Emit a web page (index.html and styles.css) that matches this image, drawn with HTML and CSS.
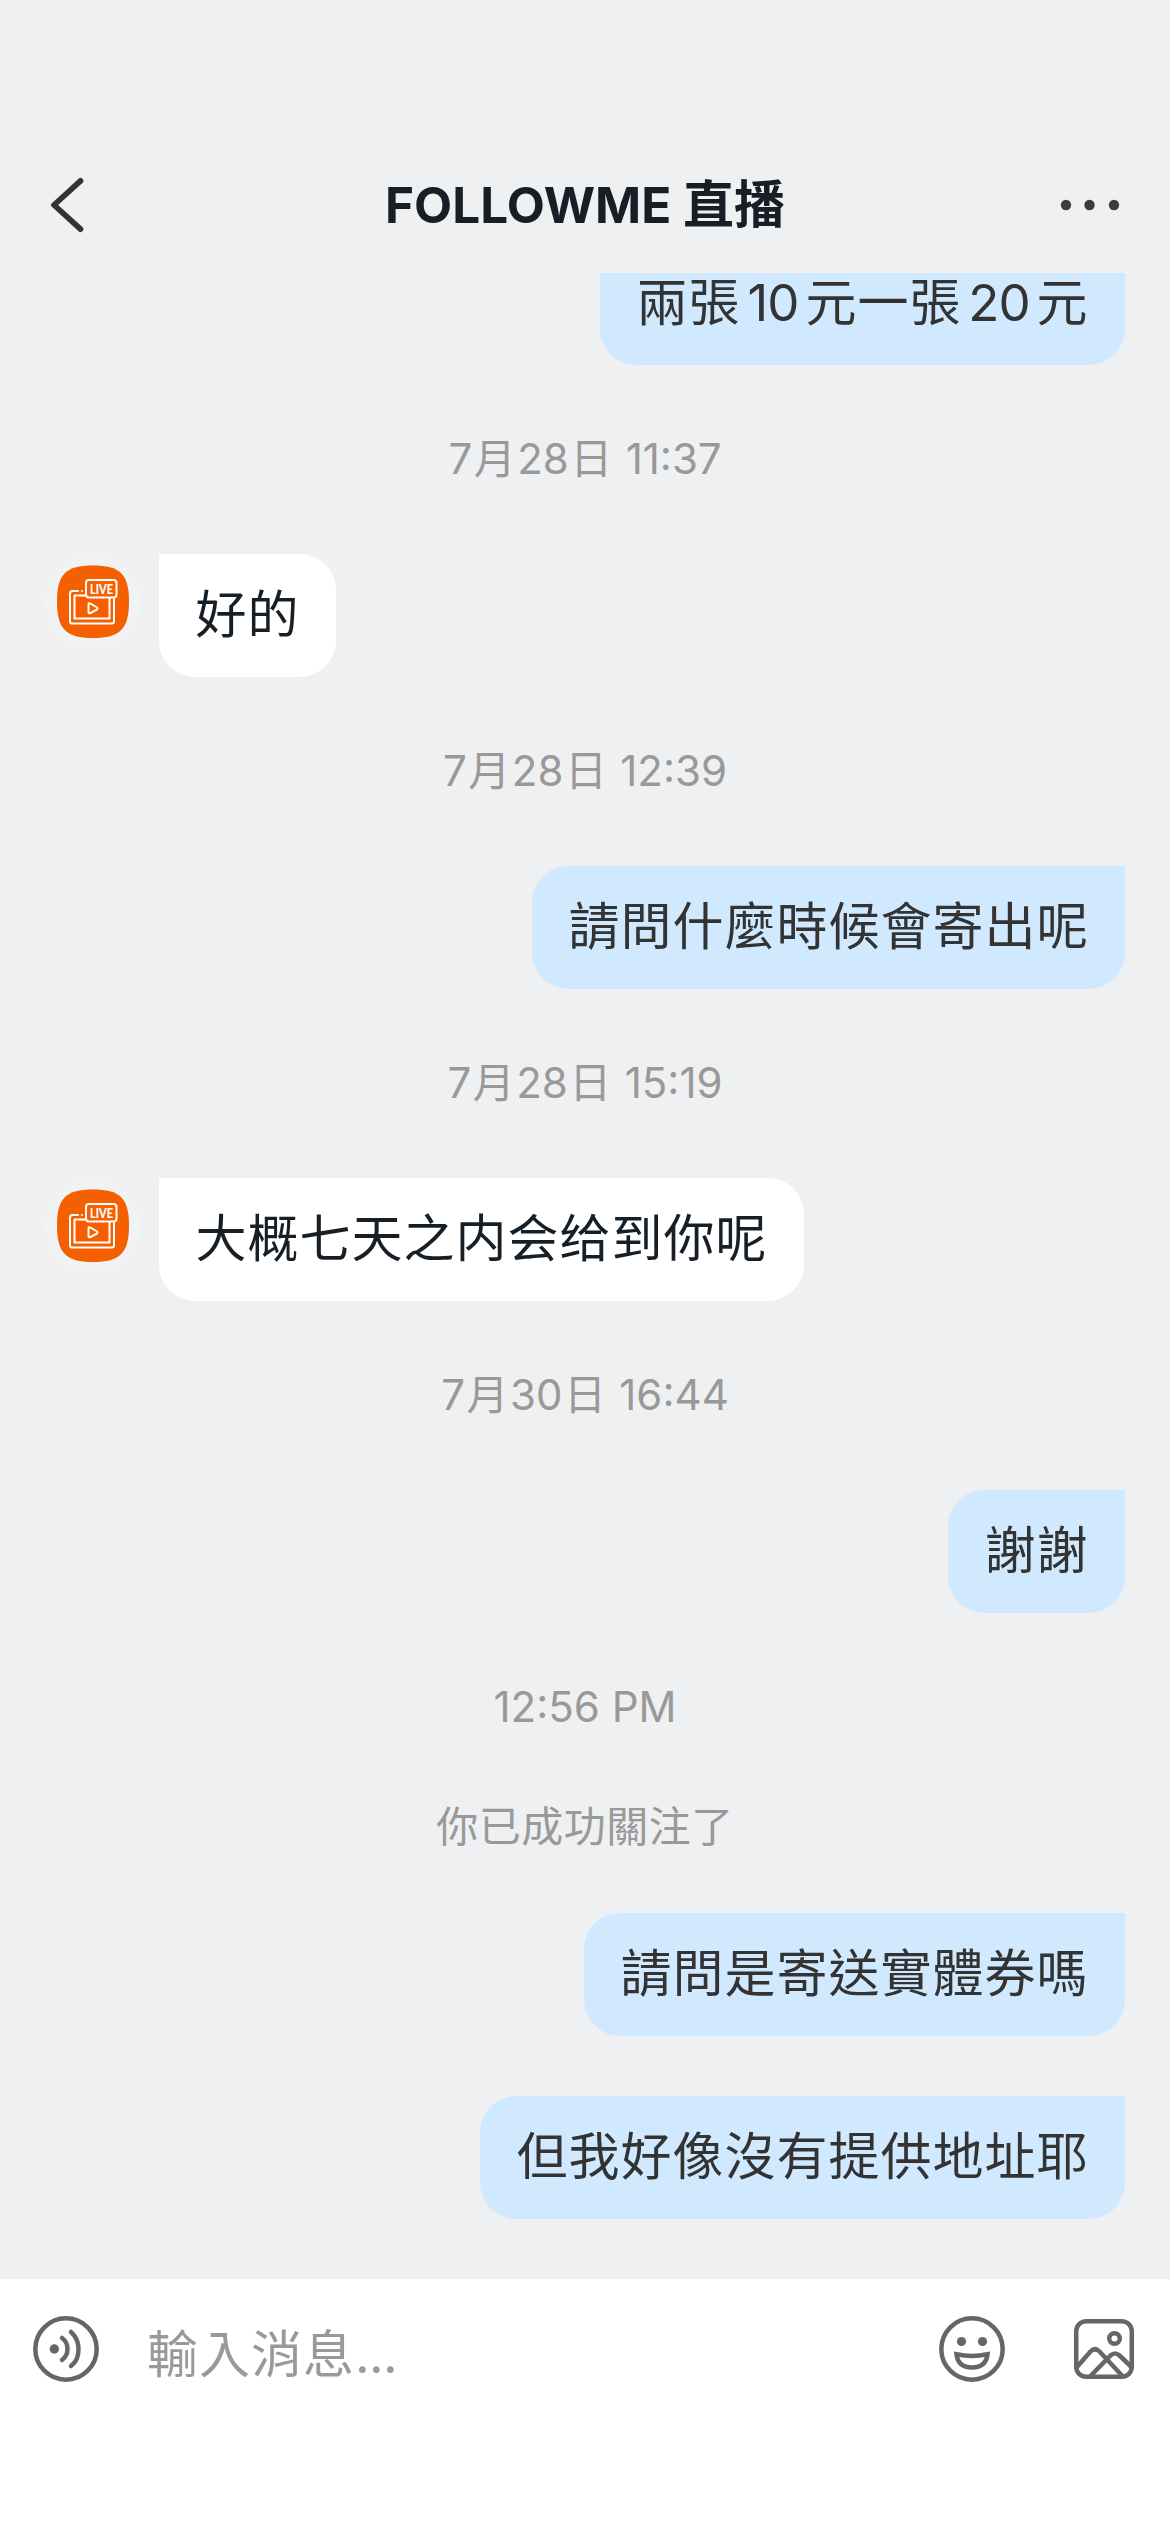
FILE: index.html
```html
<!DOCTYPE html>
<html lang="zh-Hant">
<head>
<meta charset="utf-8">
<title>FOLLOWME 直播</title>
<link rel="stylesheet" href="styles.css">
</head>
<body>
<svg class="defs" width="0" height="0" aria-hidden="true">
  <symbol id="avatar" viewBox="0 0 96 96">
    <circle cx="48" cy="48" r="48" fill="#f1f2f3"/>
    <path d="M48 11.500C75 11.500 84 20 84 47.500S75 84 48 84S12 75 12 47.500S21 11.500 48 11.500Z" fill="#f55f00"/>
    <g fill="none" stroke="#fff" stroke-width="2" stroke-linecap="round" stroke-linejoin="round">
      <path d="M33 37H27.500Q25 37 25 39.500V67.500Q25 69.500 27 69.500H67Q69 69.500 69 67.500V45"/>
      <path d="M40 41.500H29.500V64.500H64.500V45"/>
      <path d="M37 37h.1"/>
      <rect x="41" y="26" width="30.500" height="17.500" rx="3"/>
      <path d="M43.500 50.500Q43.500 48.500 45.500 49.500L52 53.500Q53 54.500 52 55.500L45.500 59Q43.500 60 43.500 58Z"/>
    </g>
  </symbol>
</svg>
<div class="screen">
  <header class="header">
    <svg class="back" width="40" height="60" viewBox="0 0 40 60"><path d="M35.500 5.800L9 30L35.500 54.200"/></svg>
    <h1 class="title">FOLLOWME <span class="title-cjk">直播</span></h1>
    <svg class="more" width="60" height="12" viewBox="0 0 60 12"><circle cx="6" cy="6" r="5.200"/><circle cx="29.500" cy="6" r="5.200"/><circle cx="54" cy="6" r="5.200"/></svg>
  </header>
  <main class="chat">
    <div class="row mine cut"><p class="bubble">兩張<span class="num one">10</span>元一張<span class="num two">20</span>元</p></div>
    <time class="date">7<i>月</i>28<i>日</i> 11:37</time>
    <div class="row theirs"><svg class="avatar" viewBox="0 0 96 96"><use href="#avatar" width="96" height="96"/><text x="45" y="39.500" class="live" textLength="23" lengthAdjust="spacingAndGlyphs">LIVE</text></svg><p class="bubble" lang="zh-Hans">好的</p></div>
    <time class="date">7<i>月</i>28<i>日</i> 12:39</time>
    <div class="row mine"><p class="bubble">請問什麼時候會寄出呢</p></div>
    <time class="date">7<i>月</i>28<i>日</i> 15:19</time>
    <div class="row theirs"><svg class="avatar" viewBox="0 0 96 96"><use href="#avatar" width="96" height="96"/><text x="45" y="39.500" class="live" textLength="23" lengthAdjust="spacingAndGlyphs">LIVE</text></svg><p class="bubble" lang="zh-Hans">大概七天之内会给到你呢</p></div>
    <time class="date">7<i>月</i>30<i>日</i> 16:44</time>
    <div class="row mine"><p class="bubble">謝謝</p></div>
    <time class="date">12:56 PM</time>
    <p class="notice">你已成功關注了</p>
    <div class="row mine"><p class="bubble">請問是寄送實體券嗎</p></div>
    <div class="row mine next"><p class="bubble">但我好像沒有提供地址耶</p></div>
  </main>
  <footer class="composer">
    <svg class="icon" width="66" height="66" viewBox="0 0 66 66">
      <circle cx="33" cy="33" r="30.700"/><circle class="dot" cx="21.300" cy="33" r="4.700"/>
      <path d="M29 22Q34.500 26 34.500 33T29 44M38 16Q45.500 22.500 45.500 33.500T38 50"/>
    </svg>
    <span class="placeholder">輸入消息<span class="ellipsis">...</span></span>
    <svg class="icon" width="66" height="66" viewBox="0 0 66 66">
      <circle cx="33" cy="33" r="30.700"/><circle class="dot" cx="22.500" cy="25.500" r="4.600"/><circle class="dot" cx="43.500" cy="25.500" r="4.600"/>
      <path class="mouth" d="M17.500 38.300Q33 41.500 48.500 38.300Q47 51.500 33 51.500T17.500 38.300Z"/>
    </svg>
    <svg class="icon picture" width="66" height="66" viewBox="0 0 66 66">
      <rect x="5.200" y="5.200" width="55.600" height="55.600" rx="10"/>
      <circle cx="43.500" cy="22.500" r="5.300"/>
      <path d="M5.500 51.500L19.500 35.500Q24 31 28.500 35.500L51 59.500M20 59.500L39.500 39.500Q44 35.500 48.500 39.500L60 50.500"/>
    </svg>
  </footer>
</div>
</body>
</html>
```
FILE: styles.css
```css
* { box-sizing: border-box; }
body { margin: 0; background: #eff0f2; font-family: Inter, "Noto Sans CJK TC", sans-serif; }
p, h1 { margin: 0; }
.defs { position: absolute; }
.screen { display: flex; flex-direction: column; width: 1170px; height: 2532px; background: #eff0f2; overflow: hidden; }

.header { display: grid; grid-template-columns: 120px 1fr 120px; align-items: center; flex: none; height: 273px; padding: 137px 45px 0; }
.back { fill: none; stroke: #333; stroke-width: 5.7; stroke-linecap: round; stroke-linejoin: round; }
.more { justify-self: end; fill: #3c3c3c; margin-right: 5px; }
.title { color: #181e26; font-size: 49.500px; font-weight: 700; line-height: 80px; text-align: center; white-space: nowrap; }
.title-cjk { font-size: 51px; }

.chat { flex: none; height: 2006px; overflow: hidden; }
.row { display: flex; padding: 0 45px; }
.mine { justify-content: flex-end; }
.theirs { gap: 18px; }
.cut { margin-top: -31px; }
.next { margin-top: 60px; }
.bubble { height: 123px; padding: 0 36.500px; border-radius: 36px; color: #333; background: #d1e9ff; font-size: 51px; line-height: 121px; letter-spacing: 1px; white-space: nowrap; }
.mine .bubble { border-top-right-radius: 0; }
.theirs .bubble { border-top-left-radius: 0; color: #161e26; background: #fff; font-family: Inter, "Noto Sans CJK SC", sans-serif; }
.num { display: inline-block; text-align: center; letter-spacing: -1px; }
.one { width: 65px; }
.two { width: 75px; }
.avatar { width: 96px; height: 96px; }
.live { fill: #fff; font-family: Lato, sans-serif; font-size: 13px; font-weight: 900; }
.date { display: block; height: 189px; color: #999; font-size: 42px; line-height: 187px; text-align: center; white-space: nowrap; }
.date i { padding: 0 1.5px; font-style: normal; }
.notice { height: 50px; margin-bottom: 61px; color: #999; font-size: 42px; line-height: 49px; letter-spacing: .5px; text-align: center; }

.composer { display: flex; align-items: flex-start; flex: 1; padding: 37px 33px 0; background: #fff; }
.icon { flex: none; fill: none; stroke: #666; stroke-width: 4.500; stroke-linecap: round; stroke-linejoin: round; }
.icon .dot { fill: #666; stroke: none; }
.icon .mouth { stroke-linejoin: miter; }
.picture { margin-left: 66px; }
.placeholder { flex: 1; margin-left: 48px; color: #999; font-size: 51px; line-height: 78px; letter-spacing: 1px; }
.ellipsis { letter-spacing: -.7px; }
```
